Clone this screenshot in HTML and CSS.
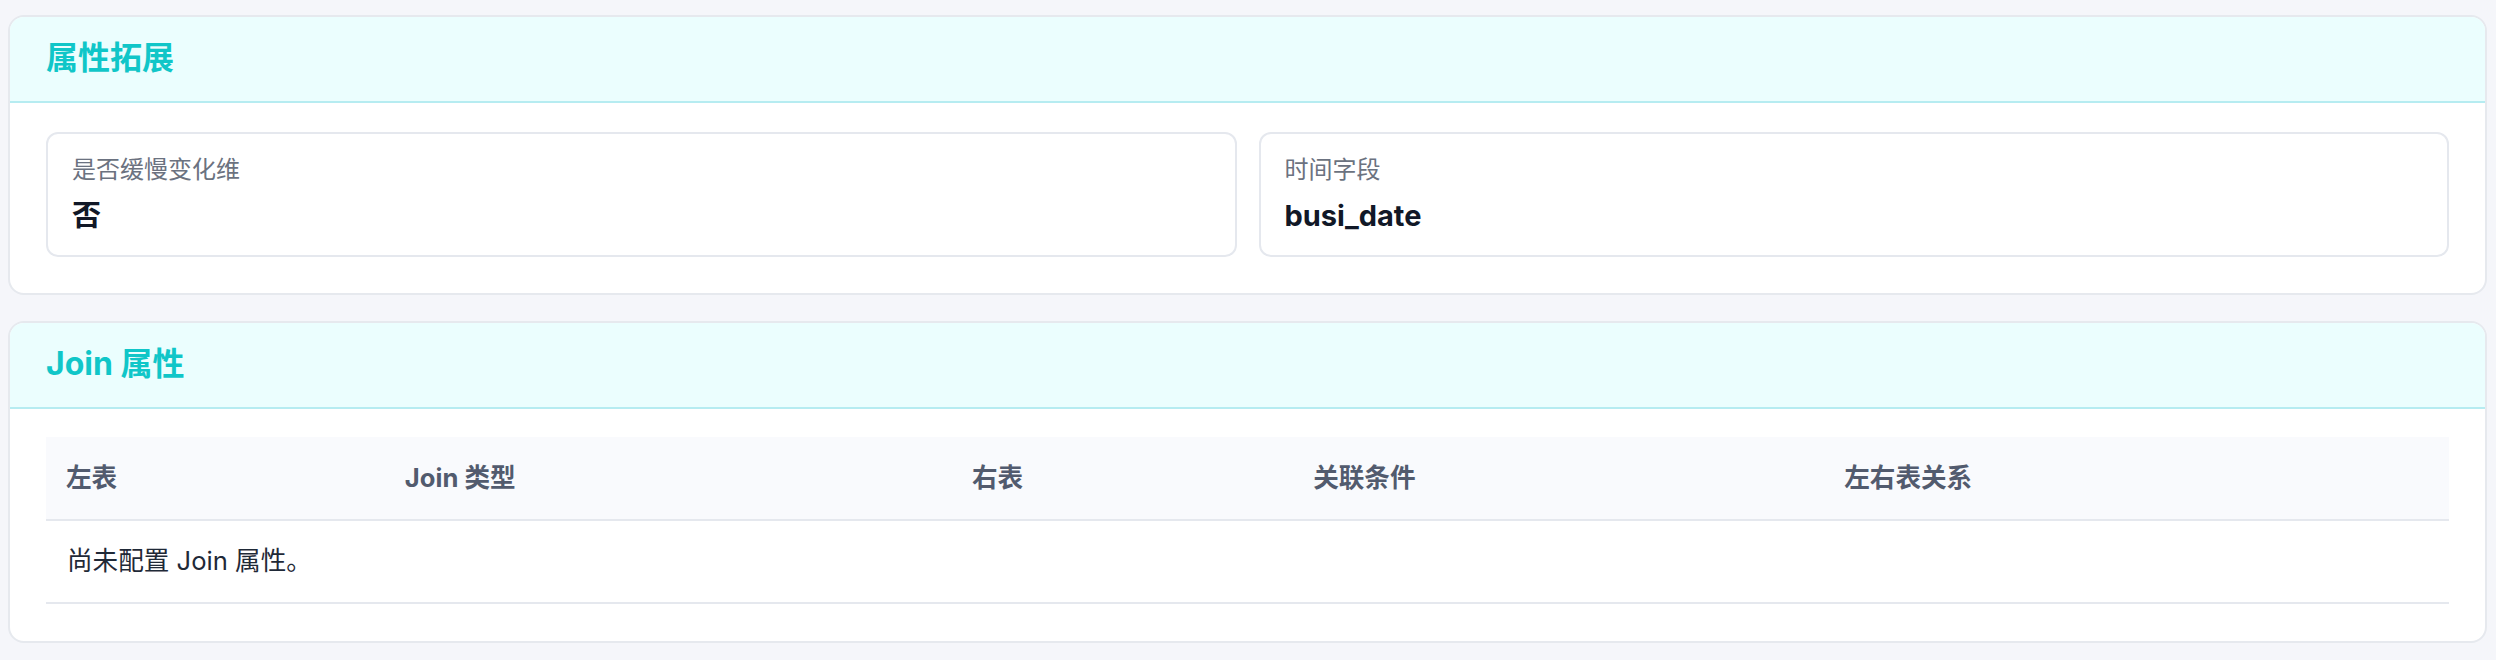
FILE: index.html
```html
<!DOCTYPE html>
<html lang="zh-CN">
<head>
    <meta charset="UTF-8">
    <meta name="viewport" content="width=device-width, initial-scale=1.0">
    <title>属性拓展</title>
    <link rel="stylesheet" href="styles.css">
</head>
<body>
    <div class="panel">
        <div class="panel-header">
            <h2 class="panel-title">属性拓展</h2>
        </div>
        <div class="panel-body">
            <div class="field-grid">
                <div class="field">
                    <div class="field-label">是否缓慢变化维</div>
                    <div class="field-value">否</div>
                </div>
                <div class="field">
                    <div class="field-label">时间字段</div>
                    <div class="field-value">busi_date</div>
                </div>
            </div>
        </div>
    </div>

    <div class="panel">
        <div class="panel-header">
            <h2 class="panel-title">Join 属性</h2>
        </div>
        <div class="panel-body">
            <table class="join-table">
                <colgroup>
                    <col class="col-left">
                    <col class="col-type">
                    <col class="col-right">
                    <col class="col-cond">
                    <col class="col-rel">
                </colgroup>
                <thead>
                    <tr>
                        <th>左表</th>
                        <th>Join 类型</th>
                        <th>右表</th>
                        <th>关联条件</th>
                        <th>左右表关系</th>
                    </tr>
                </thead>
                <tbody>
                    <tr>
                        <td colspan="5">尚未配置 Join 属性。</td>
                    </tr>
                </tbody>
            </table>
        </div>
    </div>
</body>
</html>
```

FILE: styles.css
```css
body {
    margin: 0;
    padding: 15px 9px 0 8px;
    background: #f5f6fa;
    font-family: Inter, "Noto Sans CJK SC", sans-serif;
    color: #1f2937;
}

.panel {
    background: #fff;
    border: 2px solid #e6e9ee;
    border-radius: 16px;
    overflow: hidden;
}
.panel + .panel { margin-top: 26px; }

.panel-header {
    background: #ebfefe;
    border-bottom: 2px solid #b6ecf1;
    padding: 22px 36px 24px;
}
.panel-title {
    margin: 0;
    font-size: 32px;
    line-height: 38px;
    font-weight: 700;
    color: #10c6c8;
}

.panel-body { padding: 29px 36px 36px; }
.panel + .panel .panel-body { padding-top: 28px; padding-bottom: 37px; }

.field-grid {
    display: grid;
    grid-template-columns: 1fr 1fr;
    gap: 22px;
}
.field {
    border: 2px solid #e5e8ee;
    border-radius: 12px;
    padding: 20px 24px 21px;
}
.field-label {
    font-size: 24px;
    line-height: 32px;
    color: #6b7280;
}
.field-value {
    margin-top: 12px;
    font-size: 29px;
    line-height: 36px;
    font-weight: 700;
    color: #111827;
}

.join-table {
    width: 100%;
    border-collapse: collapse;
    table-layout: fixed;
}
.col-left { width: 14.1%; }
.col-type { width: 23.6%; }
.col-right { width: 14.2%; }
.col-cond { width: 22.1%; }
.col-rel { width: 26%; }

.join-table th {
    background: #f9fafd;
    text-align: left;
    font-size: 25.6px;
    line-height: 38px;
    font-weight: 700;
    color: #525b6e;
    padding: 22px 20px;
    border-bottom: 2px solid #e5e8ee;
}
.join-table td {
    font-size: 25.6px;
    line-height: 38px;
    color: #1f2937;
    padding: 21px 21px 22px;
    border-bottom: 2px solid #e5e8ee;
}
```
